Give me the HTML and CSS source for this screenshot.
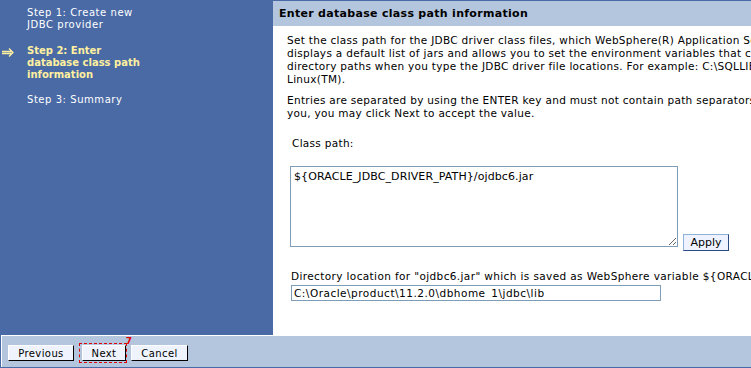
FILE: index.html
```html
<!DOCTYPE html>
<html>
<head>
<meta charset="utf-8">
<link rel="stylesheet" href="styles.css">
</head>
<body>
<div class="page">
  <div class="top">
    <nav class="sidebar">
      <div class="step">Step 1: Create new<br>JDBC provider</div>
      <div class="step current">
        <svg class="arrow" width="13" height="9" viewBox="0 0 13 9"><path d="M0 3.5h10M0 5.5h10M7 0.5l4 4-4 4" fill="none" stroke="#fff0a0" stroke-width="1.3"/></svg>
        Step 2: Enter<br>database class path<br>information
      </div>
      <div class="step">Step 3: Summary</div>
    </nav>
    <main class="main">
      <h1 class="title">Enter database class path information</h1>
      <div class="body">
        <p class="para">Set the class path for the JDBC driver class files, which WebSphere(R) Application Server uses to define the JDBC provider. This wizard page<br>displays a default list of jars and allows you to set the environment variables that contain the<br>directory paths when you type the JDBC driver file locations. For example: C:\SQLLIB\java\db2jcc.jar on Windows(R) or /opt/IBM/db2 on<br>Linux(TM).</p>
        <p class="para">Entries are separated by using the ENTER key and must not contain path separators such as ';' or ':'. If the value is already set for<br>you, you may click Next to accept the value.</p>
        <div class="field">
          <label class="label">Class path:</label>
          <div class="cp-row">
            <textarea class="cp">${ORACLE_JDBC_DRIVER_PATH}/ojdbc6.jar</textarea>
            <button class="apply">Apply</button>
          </div>
        </div>
        <div class="dir">
          <label class="label2">Directory location for "ojdbc6.jar" which is saved as WebSphere variable ${ORACLE_JDBC_DRIVER_PATH}</label>
          <input class="dir-input" type="text" value="C:\Oracle\product\11.2.0\dbhome_1\jdbc\lib">
        </div>
      </div>
    </main>
  </div>
  <footer class="footer">
    <button class="btn prev">Previous</button>
    <span class="focus-wrap"><button class="btn next">Next</button><span class="mark">7</span></span>
    <button class="btn cancel">Cancel</button>
  </footer>
</div>
</body>
</html>
```

FILE: styles.css
```css
html, body {
  margin: 0;
  padding: 0;
  width: 751px;
  height: 368px;
  overflow: hidden;
  background: #fff;
  font-family: "DejaVu Sans", Verdana, sans-serif;
}
.page {
  display: flex;
  flex-direction: column;
  width: 751px;
  height: 368px;
}
.top {
  display: flex;
  height: 335px;
}
.sidebar {
  width: 273px;
  flex: none;
  background: #4a6aa5;
  color: #fff;
  font-size: 10px;
  line-height: 12px;
  letter-spacing: 0.55px;
  padding: 7px 0 0 27px;
  box-sizing: border-box;
}
.step {
  position: relative;
  margin-bottom: 14px;
}
.step.current {
  color: #fff0a0;
  font-weight: bold;
  letter-spacing: 0;
  margin-bottom: 13px;
}
.arrow {
  position: absolute;
  left: -25px;
  top: 3px;
}
.main {
  flex: 1;
  min-width: 0;
  overflow: hidden;
  border-top: 1px solid #4a6aa5;
}
.title {
  margin: 0;
  height: 25px;
  background: #b4c6de;
  font-size: 11px;
  font-weight: bold;
  line-height: 25px;
  padding-left: 6px;
  letter-spacing: 0.3px;
  color: #000;
  white-space: nowrap;
}
.body {
  padding: 8px 0 0 14px;
  font-size: 10.5px;
  letter-spacing: 0.3px;
  white-space: nowrap;
}
.para {
  margin: 0 0 8px;
  line-height: 13px;
}
.field {
  padding-left: 3px;
  margin-top: 17px;
}
.label {
  display: block;
  padding-left: 2px;
  line-height: 13px;
  margin-bottom: 16px;
}
.cp-row {
  display: flex;
  align-items: flex-end;
  gap: 5px;
}
.cp {
  width: 388px;
  height: 81px;
  box-sizing: border-box;
  border: 1px solid #7f9db9;
  font-family: "DejaVu Sans", Verdana, sans-serif;
  font-size: 11px;
  letter-spacing: 0.1px;
  padding: 3px 3px;
  resize: both;
  margin: 0;
  overflow: hidden;
}
.apply {
  width: 46px;
  height: 17px;
  margin: 0 0 -4px;
  padding: 0;
  background: #eef3ff;
  border: 1px solid;
  border-color: #8fb0d8 #2a4a80 #2a4a80 #8fb0d8;
  font-family: "DejaVu Sans", Verdana, sans-serif;
  font-size: 11px;
  color: #000;
}
.dir {
  margin-top: 23px;
  padding-left: 4px;
}
.label2 {
  display: block;
  line-height: 12px;
  letter-spacing: 0.38px;
}
.dir-input {
  display: block;
  width: 370px;
  height: 16px;
  box-sizing: border-box;
  border: 1px solid #7f9db9;
  margin: 3px 0 0;
  padding: 0 2px;
  font-family: "DejaVu Sans", Verdana, sans-serif;
  font-size: 10.5px;
  letter-spacing: 0.5px;
}
.footer {
  height: 33px;
  box-sizing: border-box;
  background: #b4c6de;
  border-left: 1px solid #4a6aa5;
  border-bottom: 1px solid #4a6aa5;
  box-shadow: inset 1px 1px 0 #fff;
  display: flex;
  align-items: flex-start;
  padding: 10px 0 0 7px;
}
.btn {
  height: 16px;
  padding: 0;
  background: #eef3fd;
  border: 1px solid;
  border-color: #fff #000 #000 #fff;
  font-family: "DejaVu Sans", Verdana, sans-serif;
  font-size: 10px;
  letter-spacing: 0.4px;
  color: #000;
}
.prev {
  width: 66px;
}
.focus-wrap {
  position: relative;
  display: inline-flex;
  margin: -2px 0 0 5px;
  padding: 1px 0 1px 2px;
  border: 1px dashed #e00000;
}
.next {
  width: 44px;
}
.mark {
  position: absolute;
  right: -6px;
  top: -7px;
  color: #e00000;
  font-size: 9px;
  font-weight: bold;
  line-height: 8px;
}
.cancel {
  width: 57px;
  margin-left: 4px;
}
```
